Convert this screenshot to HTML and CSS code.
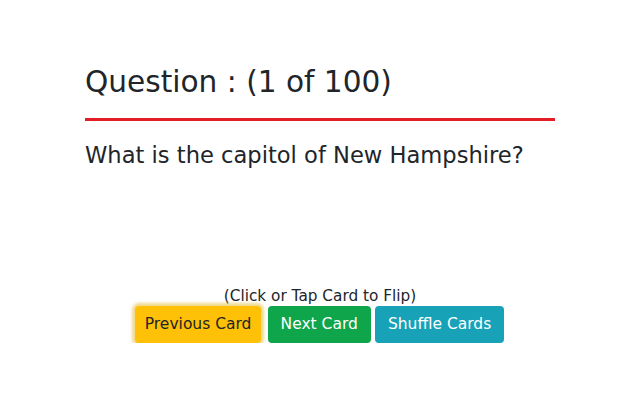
FILE: index.html
```html
<!DOCTYPE html>
<html>
  <head>
    <meta name="viewport" content="width=device-width, initial-scale=1.0" />
    <link rel="stylesheet" href="styles.css">
  </head>

  <body>
    <div class="flashcard">
      <h2 class="card-title">Question : (1 of 100)</h2>
      <p class="card-text">What is the capitol of New Hampshire?</p>
    </div>

    <div class="controls">
      <div class="hint">(Click or Tap Card to Flip)</div>
      <button class="btn btn-warning">Previous Card</button>
      <button class="btn btn-success">Next Card</button>
      <button class="btn btn-info">Shuffle Cards</button>
    </div>
  </body>
</html>
```

FILE: styles.css
```css
body {
  margin: 0;
  background: #fff;
  color: #212529;
  font-family: "Comic Sans MS", "DejaVu Sans", sans-serif;
}

/*the card itself, heading underlined in red:*/
.flashcard {
  width: 470px;
  margin: 0 auto;
  padding-top: 63px;
  height: 223px;
}

.card-title {
  margin: 0;
  padding-bottom: 17px;
  border-bottom: 3px solid #e41e26;
  font-size: 29.6px;
  font-weight: normal;
  line-height: 38px;
}

.card-text {
  margin: 19px 0 0;
  font-size: 22.6px;
  line-height: 30px;
}

.controls {
  text-align: center;
}

.hint {
  font-size: 15.3px;
  line-height: 20px;
}

/*bootstrap-like buttons:*/
.btn {
  font-family: inherit;
  font-size: 15.5px;
  line-height: 23px;
  padding: 6px 12px;
  margin: 0 0 0 -1px;
  border: 1px solid transparent;
  border-radius: 4px;
  cursor: pointer;
}

.btn-warning {
  background-color: #ffc107;
  color: #212529;
  padding: 6px 9px;
  margin-right: 2px;
  box-shadow: 0 0 3px 3px rgba(222, 170, 12, 0.45);
}

.btn-success {
  background-color: #0ea54b;
  color: #fff;
}

.btn-info {
  background-color: #17a2b8;
  color: #fff;
}
```
